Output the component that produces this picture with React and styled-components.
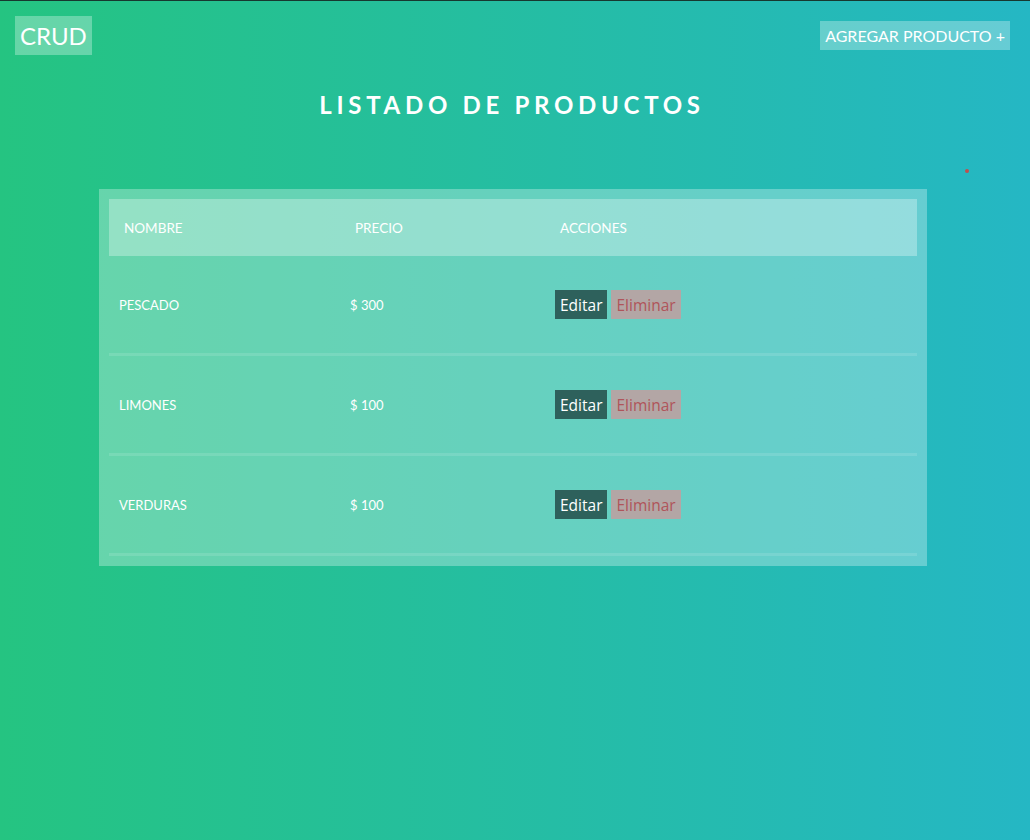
import styled, { createGlobalStyle } from 'styled-components';

const GlobalStyle = createGlobalStyle`
    html, body {
        margin: 0;
        padding: 0;
        height: 100%;
    }
    body {
        font-family: Lato, "Liberation Sans", sans-serif;
        background: linear-gradient(to right, #25c481, #25b7c4);
        min-height: 840px;
    }
`;

const productos = [
    { nombre: 'Pescado', precio: 300 },
    { nombre: 'Limones', precio: 100 },
    { nombre: 'Verduras', precio: 100 },
];

const App = () => {
    return (
        <>
            <GlobalStyle />
            <Page>
                <Nav>
                    <Brand>CRUD</Brand>
                    <AddButton>AGREGAR PRODUCTO +</AddButton>
                </Nav>
                <Title>Listado de productos</Title>
                <Dot />
                <TableBox>
                    <HeadRow>
                        <Th>Nombre</Th>
                        <Th>Precio</Th>
                        <Th>Acciones</Th>
                    </HeadRow>
                    {productos.map((p) => (
                        <Row key={p.nombre}>
                            <Td>{p.nombre}</Td>
                            <Td>$ {p.precio}</Td>
                            <Td>
                                <Button $variant="edit">Editar</Button>
                                <Button $variant="delete">Eliminar</Button>
                            </Td>
                        </Row>
                    ))}
                </TableBox>
            </Page>
        </>
    );
};

const Page = styled.div`
    min-height: 840px;
    border-top: 1px solid #17382f;
    box-sizing: border-box;
    position: relative;
`;

const Nav = styled.nav`
    display: flex;
    justify-content: space-between;
    align-items: flex-start;
    padding: 15px 20px 0 15px;
`;

const Brand = styled.div`
    background: rgba(255, 255, 255, 0.3);
    color: #fff;
    font-size: 24px;
    line-height: 39px;
    padding: 0 5px;
`;

const AddButton = styled.button`
    margin-top: 5px;
    background: rgba(255, 255, 255, 0.3);
    border: none;
    color: #fff;
    font-family: Lato, "Liberation Sans", sans-serif;
    font-size: 16px;
    height: 29px;
    padding: 0 5px;
`;

const Title = styled.h1`
    margin: 35px 0 0 0;
    padding-right: 6px;
    text-align: center;
    color: #fff;
    font-size: 24px;
    font-weight: 700;
    letter-spacing: 4.7px;
    text-transform: uppercase;
    line-height: 30px;
`;

const Dot = styled.span`
    position: absolute;
    top: 168px;
    left: 965px;
    width: 4px;
    height: 4px;
    border-radius: 50%;
    background: #c0504d;
`;

const TableBox = styled.div`
    width: 808px;
    margin: 69px 0 0 99px;
    padding: 10px;
    background: rgba(255, 255, 255, 0.3);
`;

const columns = '231px 205px 1fr';

const HeadRow = styled.div`
    display: grid;
    grid-template-columns: ${columns};
    height: 57px;
    align-items: center;
    background: rgba(255, 255, 255, 0.3);
`;

const Th = styled.div`
    padding: 0 15px;
    color: #fff;
    font-size: 13.5px;
    font-weight: 400;
    text-transform: uppercase;
`;

const Row = styled.div`
    display: grid;
    grid-template-columns: ${columns};
    height: 97px;
    align-items: center;
    border-bottom: 3px solid rgba(255, 255, 255, 0.12);
`;

const Td = styled.div`
    display: flex;
    align-items: center;
    gap: 4px;
    padding: 0 10px;
    color: #fff;
    font-size: 13px;
    font-weight: 400;
    text-transform: uppercase;
`;

const Button = styled.button`
    border: none;
    height: 29px;
    padding: 0 5px;
    font-family: "Open Sans", "Noto Sans", sans-serif;
    font-size: 15.5px;
    background: ${(p) => (p.$variant === 'edit' ? '#2e615c' : '#b3a6a5')};
    color: ${(p) => (p.$variant === 'edit' ? '#fff' : '#b0545a')};
    text-transform: none;
`;

export default App;
